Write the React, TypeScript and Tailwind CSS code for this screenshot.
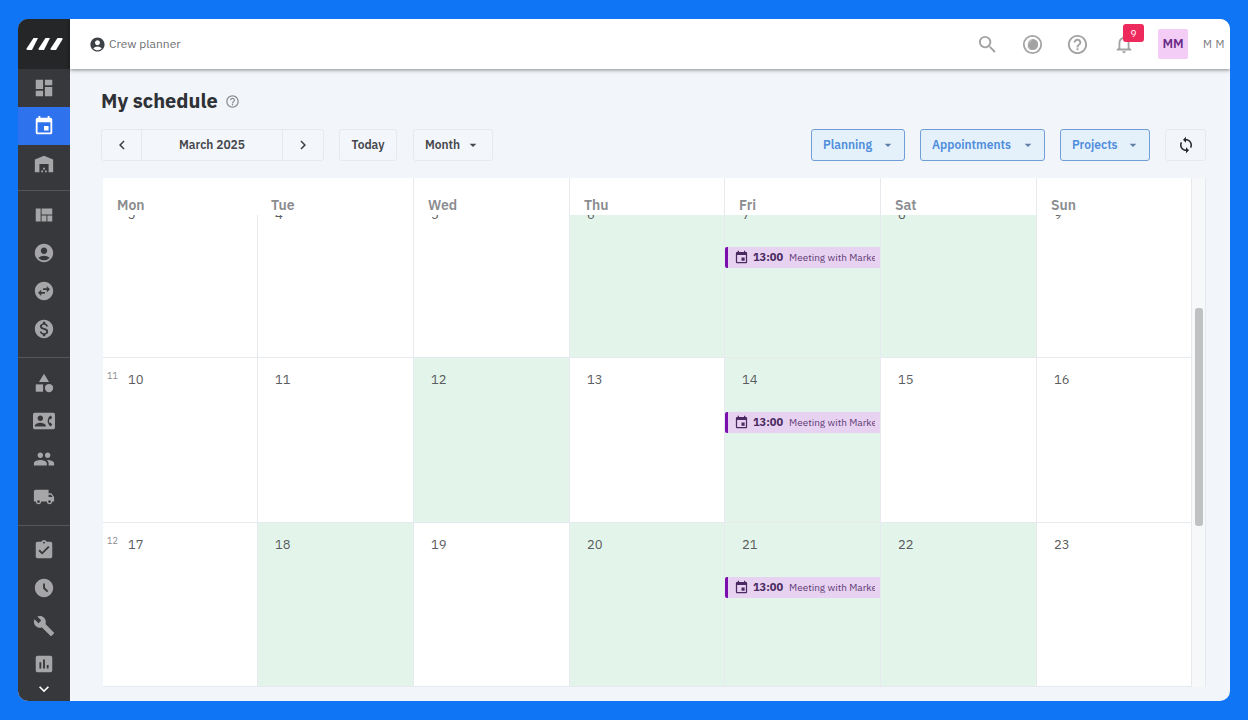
import type { IconType } from 'react-icons'
import {
  MdAccessTimeFilled,
  MdAccountCircle,
  MdArrowDropDown,
  MdAssessment,
  MdAssignmentTurnedIn,
  MdBuild,
  MdCategory,
  MdChevronLeft,
  MdChevronRight,
  MdContactPhone,
  MdDashboard,
  MdEvent,
  MdExpandMore,
  MdHelpOutline,
  MdLocalShipping,
  MdMonetizationOn,
  MdNotificationsNone,
  MdPeople,
  MdSearch,
  MdSwapHorizontalCircle,
  MdSync,
  MdViewQuilt,
  MdWarehouse,
} from 'react-icons/md'

const FONT = 'font-["IBM_Plex_Sans","Noto_Sans","Open_Sans",sans-serif]'

const NAV_GROUPS: { icons: IconType[]; className: string }[] = [
  { icons: [MdDashboard, MdEvent, MdWarehouse], className: 'pb-[7px] border-b border-[#55575a]' },
  {
    icons: [MdViewQuilt, MdAccountCircle, MdSwapHorizontalCircle, MdMonetizationOn],
    className: 'pt-[5px] pb-[9px] border-b border-[#55575a]',
  },
  {
    icons: [MdCategory, MdContactPhone, MdPeople, MdLocalShipping],
    className: 'pt-[6px] pb-[9px] border-b border-[#55575a]',
  },
  { icons: [MdAssignmentTurnedIn, MdAccessTimeFilled, MdBuild, MdAssessment], className: 'pt-[5px]' },
]

const DAYS = ['Mon', 'Tue', 'Wed', 'Thu', 'Fri', 'Sat', 'Sun']

const WEEKS = [
  { no: 10, dates: [3, 4, 5, 6, 7, 8, 9], green: [3, 4, 5] },
  { no: 11, dates: [10, 11, 12, 13, 14, 15, 16], green: [2, 4] },
  { no: 12, dates: [17, 18, 19, 20, 21, 22, 23], green: [1, 3, 4, 5] },
]

const COLS = 'grid grid-cols-[154px_156px_156px_155px_156px_156px_155px]'

function Sidebar() {
  return (
    <aside className="flex h-full w-[52px] shrink-0 flex-col bg-[#36383b]">
      <div className="flex h-[50px] shrink-0 items-center justify-center bg-[#252627]">
        <svg width="37" height="14" viewBox="0 0 37 14" fill="#fff">
          <path d="M7.5 1 H12 L6 13 H1.5 Q0 13 .6 11.6 Z" />
          <path d="M19.5 1 H24 L18 13 H13.5 Q12 13 12.6 11.6 Z" />
          <path d="M31.5 1 H35.5 Q37 1 36.4 2.4 L30 13 H25.5 Q24 13 24.6 11.6 Z" />
        </svg>
      </div>
      {NAV_GROUPS.map((group, i) => (
        <div key={i} className={group.className}>
          {group.icons.map((Icon, j) => (
            <div
              key={j}
              className={`flex h-[38px] items-center justify-center ${
                Icon === MdEvent ? 'bg-[#2f72ee] text-white' : 'text-[#a6a6a8]'
              }`}
            >
              <Icon size={22} />
            </div>
          ))}
        </div>
      ))}
      <div className="flex h-[12px] items-center justify-center text-white">
        <MdExpandMore size={20} />
      </div>
    </aside>
  )
}

function Topbar() {
  return (
    <header className="z-10 flex h-[50px] shrink-0 items-center bg-white pl-[19px] pr-[5px] shadow-[0_1px_4px_rgba(0,0,0,0.45)]">
      <MdAccountCircle size={17} className="text-[#3d4045]" />
      <span className="ml-[3px] text-[12px] text-[#6d6f72]">Crew planner</span>
      <div className="ml-auto flex items-center text-[#a3a3a3]">
        <MdSearch size={23} />
        <svg width="21" height="21" viewBox="0 0 21 21" className="ml-[23px]">
          <circle cx="10.5" cy="10.5" r="8.7" fill="none" stroke="#a3a3a3" strokeWidth="1.8" />
          <path d="M10.5 5 A5.5 5.5 0 1 1 5 10.5 A7 7 0 0 0 10.5 5 Z" fill="#a3a3a3" />
          <circle cx="10.5" cy="10.5" r="5.6" fill="#a3a3a3" fillOpacity="0.85" />
          <path d="M6 7 A5.6 5.6 0 0 1 10 5 A6 6 0 0 0 9 16 A5.6 5.6 0 0 1 6 7 Z" fill="#fff" />
        </svg>
        <MdHelpOutline size={23} className="ml-[23px]" />
        <div className="relative ml-[24px]">
          <MdNotificationsNone size={22} />
          <span className="absolute -top-[9px] left-[10px] flex h-[18px] w-[21px] items-center justify-center rounded-[3px] bg-[#ee2a5c] text-[10px] text-white">
            9
          </span>
        </div>
        <div className="ml-[23px] flex h-[30px] w-[30px] items-center justify-center rounded-[2px] bg-[#f3cdf6] text-[13px] font-semibold text-[#6a2a86]">
          MM
        </div>
        <span className="ml-[15px] text-[11px] tracking-[0.5px] text-[#77797c]">M M</span>
      </div>
    </header>
  )
}

function ToolButton({ label, width, caret }: { label: string; width: string; caret?: boolean }) {
  return (
    <button
      className={`flex h-[32px] items-center justify-center rounded-[3px] border border-[#e6e9ee] bg-[#f3f6fa] text-[12px] font-semibold text-[#44474b] ${width}`}
    >
      {label}
      {caret && <MdArrowDropDown size={16} className="ml-[5px]" />}
    </button>
  )
}

function FilterButton({ label, width }: { label: string; width: string }) {
  return (
    <button
      className={`flex h-[32px] items-center rounded-[3px] border border-[#6f9fd6] bg-[#e4f1fb] pl-[11px] text-[12px] font-semibold text-[#4f8ddb] ${width}`}
    >
      {label}
      <MdArrowDropDown size={16} className="ml-auto mr-[8px] text-[#5e7fa8]" />
    </button>
  )
}

function Toolbar() {
  return (
    <div className="mt-[15px] flex h-[32px] items-center">
      <div className="flex h-[32px] w-[223px] items-center rounded-[3px] border border-[#e6e9ee] bg-[#f3f6fa] text-[#3c3f43]">
        <div className="flex h-full w-[40px] items-center justify-center border-r border-[#e6e9ee]">
          <MdChevronLeft size={18} />
        </div>
        <div className="flex-1 text-center text-[12px] font-semibold text-[#44474b]">March 2025</div>
        <div className="flex h-full w-[41px] items-center justify-center border-l border-[#e6e9ee]">
          <MdChevronRight size={18} />
        </div>
      </div>
      <div className="ml-[15px]">
        <ToolButton label="Today" width="w-[58px]" />
      </div>
      <div className="ml-[16px]">
        <ToolButton label="Month" width="w-[80px]" caret />
      </div>
      <div className="ml-auto flex items-center gap-[15px]">
        <FilterButton label="Planning" width="w-[94px]" />
        <FilterButton label="Appointments" width="w-[125px]" />
        <FilterButton label="Projects" width="w-[90px]" />
        <div className="flex h-[32px] w-[41px] items-center justify-center rounded-[3px] border border-[#e6e9ee] text-[#26282b]">
          <MdSync size={18} />
        </div>
      </div>
    </div>
  )
}

function MeetingChip() {
  return (
    <div className="mt-[22px] flex h-[21px] items-center overflow-hidden rounded-l-[2px] border-l-[3px] border-[#7a0fae] bg-[#e8d2f1] pl-[6px] pr-[5px] text-[#5c3a74]">
      <MdEvent size={15} className="shrink-0 text-[#4a2a60]" />
      <span className="ml-[4px] shrink-0 text-[11px] font-bold text-[#4a2a60]">13:00</span>
      <span className="ml-[6px] overflow-hidden whitespace-nowrap text-[10px]">Meeting with Marketing</span>
    </div>
  )
}

function Calendar() {
  return (
    <div className="ml-[2px] mt-[17px] flex h-[509px] bg-white">
      <div className="flex w-[1088px] flex-col border-b border-[#e6e9ee]">
        <div className={`${COLS} z-10 h-[37px] shrink-0 bg-white`}>
          {DAYS.map((day, i) => (
            <div
              key={day}
              className={`pl-[14px] pt-[18px] text-[14px] font-semibold leading-[18px] text-[#8a8c8e] ${
                i > 1 ? 'border-l border-[#e6e9ee]' : ''
              }`}
            >
              {day}
            </div>
          ))}
        </div>
        <div className="flex-1 overflow-hidden">
          {/* scrolled part way down: first week sits under the header */}
          <div className="-mt-[22px]">
            {WEEKS.map((week) => (
              <div key={week.no} className={`${COLS} h-[165px] border-b border-[#e6e9ee]`}>
                {week.dates.map((date, i) => (
                  <div
                    key={date}
                    className={`relative pt-[11px] ${i === 0 ? 'pl-[25px]' : 'border-l border-[#e6e9ee] pl-[17px]'} ${
                      week.green.includes(i) ? 'bg-[#e3f5eb]' : 'bg-white'
                    }`}
                  >
                    {i === 0 && (
                      <span className="absolute left-[4px] top-[11px] text-[9px] text-[#8b8d90]">{week.no}</span>
                    )}
                    <div className="h-[21px] text-[13px] leading-[21px] text-[#5b5d60]">{date}</div>
                    {i === 4 && (
                      <div className="-ml-[17px]">
                        <MeetingChip />
                      </div>
                    )}
                  </div>
                ))}
              </div>
            ))}
          </div>
        </div>
      </div>
      <div className="w-[15px] border-x border-[#e6e9ee] bg-[#f7f8f9] pl-[3px]">
        <div className="mt-[130px] h-[218px] w-[8px] rounded-[3px] bg-[#c0c1c2]" />
      </div>
    </div>
  )
}

export default function App() {
  return (
    <div className={`h-[720px] w-[1248px] overflow-hidden bg-[#0f75f5] px-[18px] py-[19px] ${FONT}`}>
      <div className="flex h-[682px] overflow-hidden rounded-[10px] bg-[#f2f5f9]">
        <Sidebar />
        <div className="flex min-w-0 flex-1 flex-col">
          <Topbar />
          <main className="flex-1 pl-[31px] pr-[24px]">
            <div className="mt-[19px] flex h-[26px] items-center">
              <h1 className="text-[20px] font-bold leading-[26px] text-[#2e3135]">My schedule</h1>
              <MdHelpOutline size={15} className="ml-[7px] text-[#8b8d90]" />
            </div>
            <Toolbar />
            <Calendar />
          </main>
        </div>
      </div>
    </div>
  )
}
